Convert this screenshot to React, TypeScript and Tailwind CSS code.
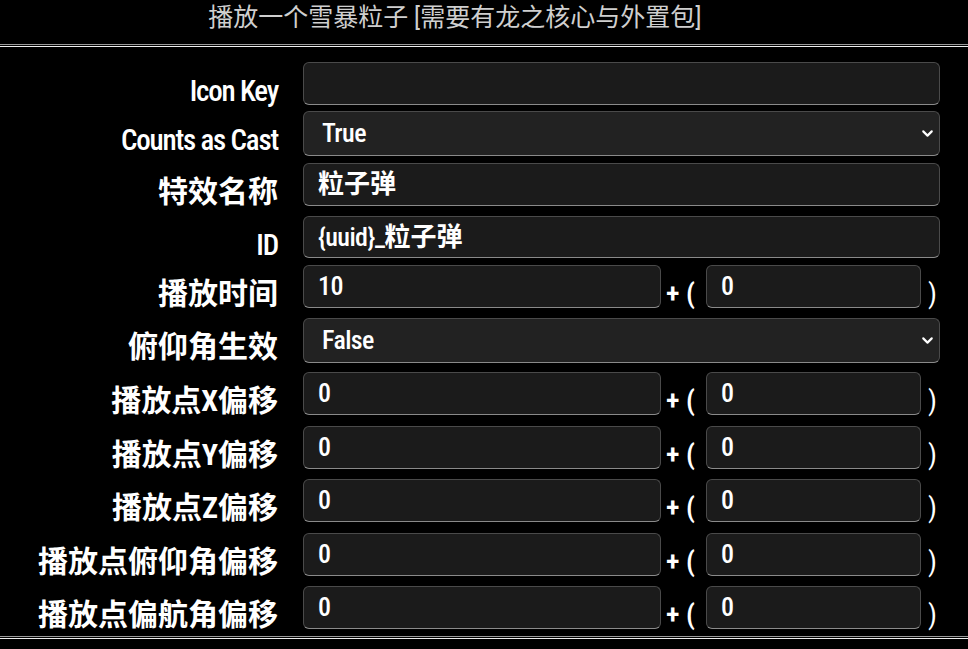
import { ChevronDown } from "lucide-react";

type Row =
  | { kind: "text"; label: string; value: string; mt: string; h: string }
  | { kind: "select"; label: string; value: string; mt: string; h: string }
  | { kind: "range"; label: string; value: string; extra: string; mt: string; h: string };

const rows: Row[] = [
  { kind: "text", label: "Icon Key", value: "", mt: "mt-0", h: "h-[43px]" },
  { kind: "select", label: "Counts as Cast", value: "True", mt: "mt-[6px]", h: "h-[45px]" },
  { kind: "text", label: "特效名称", value: "粒子弹", mt: "mt-[7px]", h: "h-[43px]" },
  { kind: "text", label: "ID", value: "{uuid}_粒子弹", mt: "mt-[10px]", h: "h-[42px]" },
  { kind: "range", label: "播放时间", value: "10", extra: "0", mt: "mt-[7px]", h: "h-[43px]" },
  { kind: "select", label: "俯仰角生效", value: "False", mt: "mt-[10px]", h: "h-[45px]" },
  { kind: "range", label: "播放点X偏移", value: "0", extra: "0", mt: "mt-[9px]", h: "h-[43px]" },
  { kind: "range", label: "播放点Y偏移", value: "0", extra: "0", mt: "mt-[11px]", h: "h-[43px]" },
  { kind: "range", label: "播放点Z偏移", value: "0", extra: "0", mt: "mt-[10px]", h: "h-[43px]" },
  { kind: "range", label: "播放点俯仰角偏移", value: "0", extra: "0", mt: "mt-[11px]", h: "h-[43px]" },
  { kind: "range", label: "播放点偏航角偏移", value: "0", extra: "0", mt: "mt-[10px]", h: "h-[43px]" },
];

// condensed latin first, CJK after
const font =
  "font-['Roboto_Condensed','Liberation_Sans_Narrow','DejaVu_Sans_Condensed','Noto_Sans_CJK_SC',sans-serif]";

const isAscii = (s: string) => /^[\x00-\x7f]*$/.test(s);

// latin runs medium, CJK runs bold (as the original page renders them)
function Mixed({ text }: { text: string }) {
  const parts = text.match(/[\x00-\x7f]+|[^\x00-\x7f]+/g) ?? [];
  return (
    <>
      {parts.map((p, i) => (
        <span key={i} className={isAscii(p) ? "font-medium tracking-[-0.6px]" : "font-bold"}>
          {p}
        </span>
      ))}
    </>
  );
}

function Field({ value, className }: { value: string; className: string }) {
  return (
    <div
      className={`${className} flex items-center rounded-[6px] border border-[#4a4a4a] border-b-[#8a8a8a] bg-[#1b1b1b] pl-[14px] pb-[1px] text-[26px] leading-none whitespace-nowrap text-white`}
    >
      <Mixed text={value} />
    </div>
  );
}

function Divider() {
  return <div className="h-[3px] border-t border-b border-t-[#9a9a9a] border-b-[#eeeeee] bg-black" />;
}

export default function App() {
  return (
    <div className={`h-[649px] w-[968px] overflow-hidden bg-black text-white ${font}`}>
      <div className="h-[44px] pr-[58px] pt-[2px] text-center text-[25px] leading-[32px] text-[#cfcfcf]">
        播放一个雪暴粒子 [需要有龙之核心与外置包]
      </div>
      <Divider />

      <div className="flex flex-col pt-[15px] pr-[28px]">
        {rows.map((row) => (
          <div key={row.label} className={`flex items-start ${row.h} ${row.mt}`}>
            <div
              className={`w-[278px] shrink-0 whitespace-nowrap text-right leading-none ${
                isAscii(row.label)
                  ? "pt-[15px] text-[29px] font-medium tracking-[-1.2px]"
                  : "pt-[14px] text-[30px] font-bold"
              }`}
            >
              {row.label}
            </div>
            <div className="ml-[25px] flex h-full flex-1 items-start">
              {row.kind === "text" && <Field value={row.value} className={`w-full ${row.h}`} />}
              {row.kind === "select" && (
                <div className="relative flex h-[45px] w-full items-center rounded-[6px] border border-[#4a4a4a] border-b-[#8a8a8a] bg-[#222222] pl-[18px] pb-[2px]">
                  <span className="text-[26px] font-medium leading-none tracking-[-0.6px]">{row.value}</span>
                  <ChevronDown
                    className="absolute right-[3px] top-[13px] h-[17px] w-[17px] text-white"
                    strokeWidth={3}
                  />
                </div>
              )}
              {row.kind === "range" && (
                <div className="flex h-full w-full items-start">
                  <Field value={row.value} className="h-[43px] w-[358px]" />
                  <span className="w-[45px] shrink-0 whitespace-nowrap pl-[5px] pt-[13px] text-[28px] font-semibold leading-[32px]">
                    + (
                  </span>
                  <Field value={row.extra} className="h-[43px] w-[215px]" />
                  <span className="pl-[7px] pt-[13px] text-[28px] leading-[32px]">)</span>
                </div>
              )}
            </div>
          </div>
        ))}
      </div>

      <div className="mt-[7px]">
        <Divider />
      </div>
    </div>
  );
}
